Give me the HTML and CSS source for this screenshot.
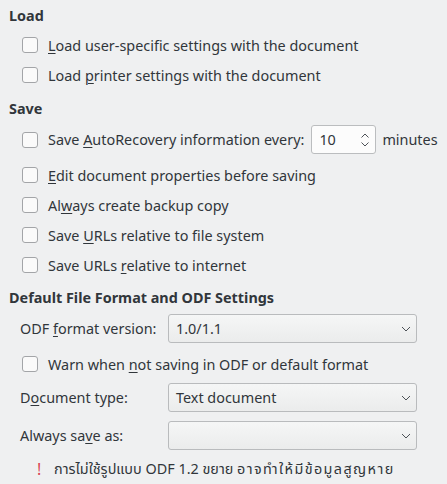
FILE: index.html
```html
<!DOCTYPE html>
<html>
<head>
<meta charset="utf-8">
<link rel="stylesheet" href="styles.css">
</head>
<body>
<div class="page">
  <div class="heading h-load">Load</div>
  <div class="group g-load">
    <label class="check"><span class="box"></span><span><u>L</u>oad user-specific settings with the document</span></label>
    <label class="check"><span class="box"></span><span>Load <u>p</u>rinter settings with the document</span></label>
  </div>

  <div class="heading h-save">Save</div>
  <div class="check spin-row">
    <span class="box"></span><span>Save <u>A</u>utoRecovery information every:</span>
    <span class="spin"><span class="spin-val">10</span>
      <svg class="spin-arrows" width="10" height="18" viewBox="0 0 10 18"><path d="M1.5 6.5 L5 3 L8.5 6.5 M1.5 11.5 L5 15 L8.5 11.5" fill="none" stroke="#4d5257" stroke-width="1"/></svg>
    </span>
    <span class="unit">minutes</span>
  </div>
  <div class="group g-save">
    <label class="check"><span class="box"></span><span><u>E</u>dit document properties before saving</span></label>
    <label class="check"><span class="box"></span><span>Al<u>w</u>ays create backup copy</span></label>
    <label class="check"><span class="box"></span><span>Save <u>U</u>RLs relative to file system</span></label>
    <label class="check"><span class="box"></span><span>Save URLs <u>r</u>elative to internet</span></label>
  </div>

  <div class="heading h-odf">Default File Format and ODF Settings</div>
  <div class="field f-first">
    <span class="flabel">ODF <u>f</u>ormat version:</span>
    <span class="combo"><span class="combo-val">1.0/1.1</span>
      <svg class="chev" width="10" height="6" viewBox="0 0 10 6"><path d="M1 1 L5 5 L9 1" fill="none" stroke="#4d5257" stroke-width="1"/></svg>
    </span>
  </div>
  <label class="check warn-row"><span class="box"></span><span>Warn when <u>n</u>ot saving in ODF or default format</span></label>
  <div class="field f-doc">
    <span class="flabel">D<u>o</u>cument type:</span>
    <span class="combo"><span class="combo-val">Text document</span>
      <svg class="chev" width="10" height="6" viewBox="0 0 10 6"><path d="M1 1 L5 5 L9 1" fill="none" stroke="#4d5257" stroke-width="1"/></svg>
    </span>
  </div>
  <div class="field f-save">
    <span class="flabel">Always sa<u>v</u>e as:</span>
    <span class="combo"><span class="combo-val"></span>
      <svg class="chev" width="10" height="6" viewBox="0 0 10 6"><path d="M1 1 L5 5 L9 1" fill="none" stroke="#4d5257" stroke-width="1"/></svg>
    </span>
  </div>
  <div class="warning"><span class="bang">!</span><span>การไม่ใช้รูปแบบ ODF 1.2 ขยาย <span class="th-wide">อาจทำให้มีข้อมูลสูญหาย</span></span></div>
</div>
</body>
</html>
```

FILE: styles.css
```css
html, body {
  margin: 0;
  padding: 0;
  background: #eff0f1;
}
body {
  font-family: "Noto Sans", "Noto Sans Thai", sans-serif;
  font-size: 14.4px;
  color: #31363b;
  width: 447px;
  height: 484px;
  overflow: hidden;
}
u {
  text-decoration: underline;
  text-underline-offset: 2px;
  text-decoration-thickness: 1px;
}
.page {
  padding: 6px 0 0 0;
  display: flex;
  flex-direction: column;
}
.heading {
  font-weight: bold;
  height: 20px;
  line-height: 20px;
  padding-left: 9px;
}
.group {
  display: flex;
  flex-direction: column;
}
.g-load { margin-top: 4px; }
.h-save { margin-top: 9px; }
.g-save { margin-top: 6px; }
.h-odf { margin-top: 8px; }

.check {
  display: flex;
  align-items: center;
  height: 30px;
  padding-left: 22px;
  white-space: nowrap;
}
.box {
  width: 14px;
  height: 14px;
  border: 1px solid #a3a5a8;
  border-radius: 3px;
  background: #fafafa;
  margin-right: 10px;
  flex: none;
}
.spin-row {
  height: 29px;
  margin-top: 6px;
}
.spin {
  margin-left: 7px;
  height: 27px;
  border: 1px solid #bbbdbf;
  border-radius: 3px;
  background: #fcfcfc;
  display: flex;
  align-items: center;
  justify-content: space-between;
  padding: 0 5px 0 7px;
  box-sizing: content-box;
  width: 51px;
}
.spin-arrows { display: block; }
.unit { margin-left: 6px; }

.field {
  display: flex;
  align-items: center;
  height: 29px;
  padding-left: 20px;
}
.f-first { margin-top: 6px; }
.warn-row { margin-top: 6px; }
.f-doc { margin-top: 4px; }
.f-save { margin-top: 9px; }
.flabel {
  width: 148px;
  flex: none;
  white-space: nowrap;
}
.combo {
  border: 1px solid #b9bbbd;
  border-radius: 3px;
  background: linear-gradient(#f5f6f6, #ebecec);
  display: flex;
  align-items: center;
  justify-content: space-between;
  padding: 0 5px 0 7px;
  box-sizing: border-box;
  height: 29px;
  width: 249px;
}
.chev { display: block; }

.warning {
  margin-top: 9px;
  height: 20px;
  display: flex;
  align-items: center;
  padding-left: 37px;
  white-space: nowrap;
}
.bang {
  color: #da4453;
  font-size: 16px;
  width: 17px;
}
.th-wide {
  letter-spacing: 1.4px;
}
```
